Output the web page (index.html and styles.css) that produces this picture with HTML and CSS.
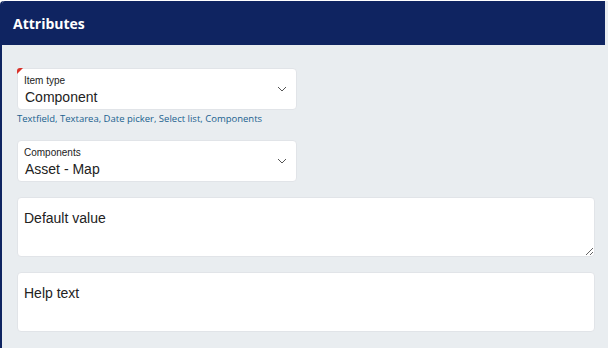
FILE: index.html
```html
<!DOCTYPE html>
<html lang="en">
<head>
  <meta charset="UTF-8">
  <meta name="viewport" content="width=device-width, initial-scale=1.0">
  <title>Attributes</title>
  <link rel="stylesheet" href="styles.css">
</head>
<body>
  <!-- Attributes panel -->
  <div class="panel">
    <div class="panel-header">
      <h1>Attributes</h1>
    </div>
    <div class="panel-body">
      <div class="field">
        <div class="select-box required">
          <span class="select-label">Item type</span>
          <span class="select-value">Component</span>
          <svg class="chevron" width="10" height="6" viewBox="0 0 10 6"><path d="M1 1l4 4 4-4" fill="none" stroke="#555" stroke-width="1"/></svg>
        </div>
        <p class="hint">Textfield, Textarea, Date picker, Select list, Components</p>
      </div>
      <div class="field">
        <div class="select-box">
          <span class="select-label">Components</span>
          <span class="select-value">Asset - Map</span>
          <svg class="chevron" width="10" height="6" viewBox="0 0 10 6"><path d="M1 1l4 4 4-4" fill="none" stroke="#555" stroke-width="1"/></svg>
        </div>
      </div>
      <textarea class="text-box" placeholder="Default value"></textarea>
      <textarea class="text-box no-resize" placeholder="Help text"></textarea>
    </div>
  </div>
</body>
</html>
```

FILE: styles.css
```css
/* General Reset */
* {
  margin: 0;
  padding: 0;
  box-sizing: border-box;
}

body {
  font-family: "Liberation Sans", Arial, sans-serif;
  background-color: #fff;
  color: #222;
}

/* Panel */
.panel {
  margin-top: 1px;
  border-left: 2px solid #0f2461;
  border-top-left-radius: 4px;
  background-color: #e9edf0;
  height: 347px;
}

.panel-header {
  background-color: #0f2461;
  height: 44px;
  margin-right: 3px;
  padding: 15px 11px;
  border-top-left-radius: 3px;
}

.panel-header h1 {
  font-family: "Open Sans", sans-serif;
  font-size: 14px;
  font-weight: 700;
  color: #fff;
  line-height: 16px;
}

.panel-body {
  padding: 23px 12px 0 15px;
  display: flex;
  flex-direction: column;
  gap: 15px;
}

.field {
  display: flex;
  flex-direction: column;
  gap: 2px;
}

.select-box {
  position: relative;
  width: 280px;
  height: 42px;
  background-color: #fff;
  border: 1px solid #e1e4e8;
  border-radius: 4px;
  padding: 6px 6px 5px;
  display: flex;
  flex-direction: column;
}

.required::before {
  content: "";
  position: absolute;
  top: -1px;
  left: -1px;
  border-top: 6px solid #d9322a;
  border-right: 6px solid transparent;
  border-top-left-radius: 3px;
}

.select-label {
  font-size: 10px;
  line-height: 12px;
  color: #222;
}

.select-value {
  font-size: 14px;
  line-height: 20px;
  color: #222;
  padding-left: 1px;
}

.chevron {
  position: absolute;
  right: 9px;
  top: 17px;
}

.hint {
  font-family: "Open Sans", sans-serif;
  font-size: 9.5px;
  line-height: 13px;
  color: #1a618f;
}

.text-box {
  display: block;
  width: 578px;
  height: 60px;
  background-color: #fff;
  border: 1px solid #e1e4e8;
  border-radius: 4px;
  padding: 12px 6px;
  font-family: "Liberation Sans", Arial, sans-serif;
  font-size: 14px;
  color: #222;
  resize: vertical;
  outline: none;
}

.text-box::placeholder {
  color: #222;
  opacity: 1;
}

.no-resize {
  resize: none;
}
```
